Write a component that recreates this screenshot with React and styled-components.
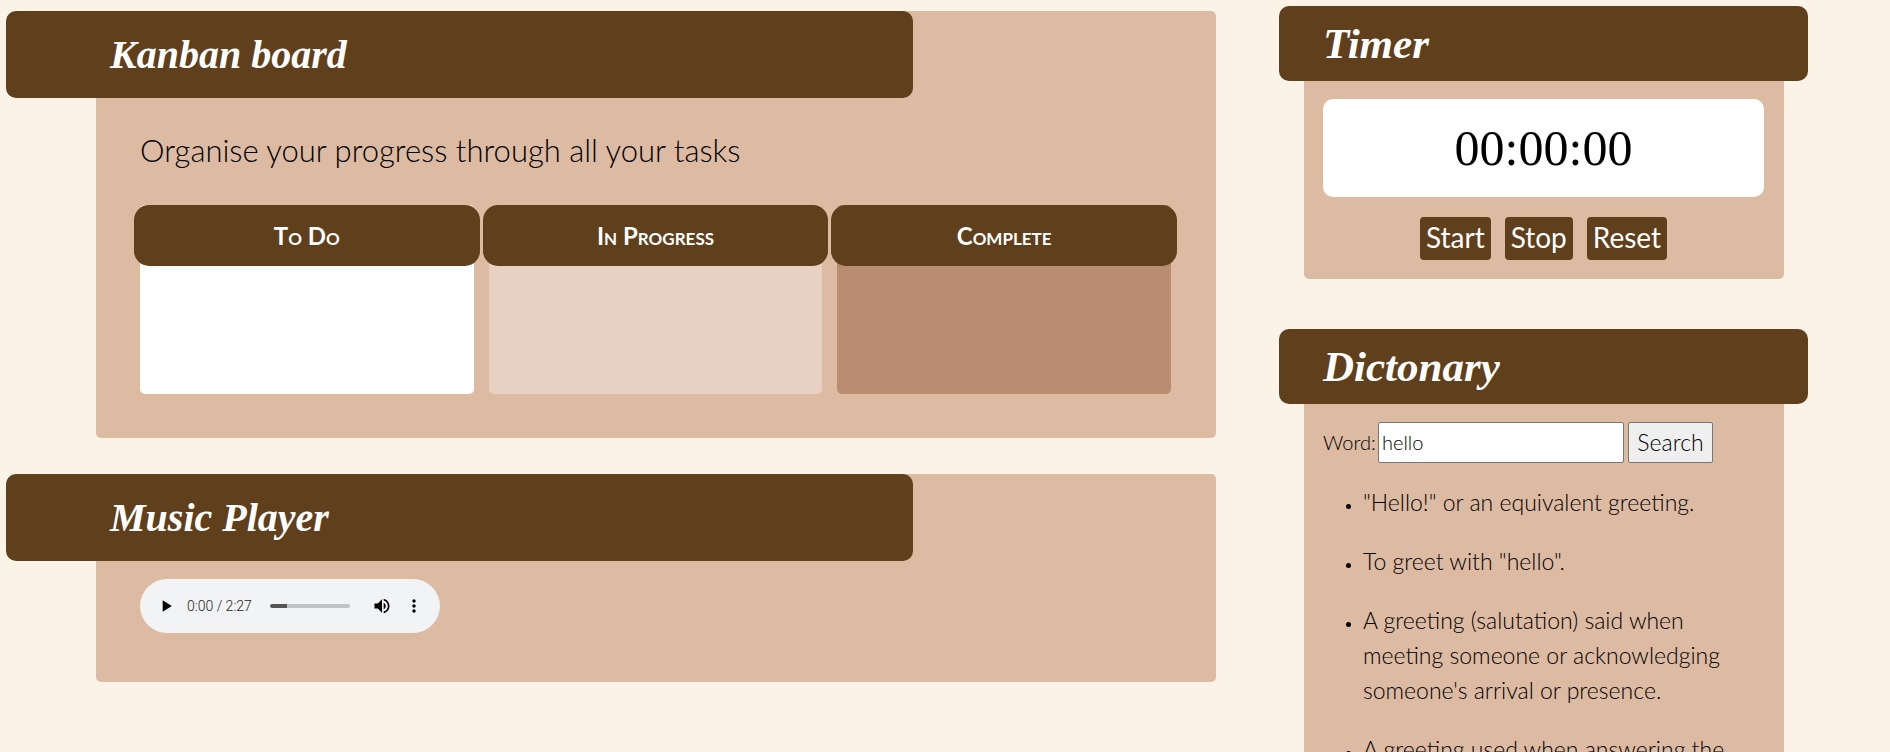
import React, { useState } from "react";
import styled, { createGlobalStyle } from "styled-components";
import { MdPlayArrow, MdVolumeUp, MdMoreVert } from "react-icons/md";

const color = {
  page: "#fbf3e8",
  brown: "#603f1d",
  tan: "#ddbaa2",
  blush: "#e8d1c2",
  clay: "#b88d72",
};

const GlobalStyle = createGlobalStyle`
  *, *::before, *::after { box-sizing: border-box; }
  body {
    margin: 0;
    background: ${color.page};
    color: #000;
    font-family: Lato, "Open Sans", sans-serif;
    font-weight: 300;
  }
  h1, h2, p, ul { margin: 0; }
`;

const Page = styled.main`
  display: grid;
  grid-template-columns: 7fr 3fr;
  align-items: start;
  column-gap: 88px;
  height: 100vh;
  padding: 0 106px 0 96px;
  overflow: hidden;
`;

const Column = styled.div`
  display: flex;
  flex-direction: column;
  gap: ${(p) => p.$gap}px;
  min-width: 0;
  padding-top: ${(p) => p.$top}px;
`;

const Panel = styled.section`
  background: ${color.tan};
  border-radius: 5px;
`;

const PanelTitle = styled.h1`
  display: flex;
  align-items: center;
  background: ${color.brown};
  color: #fff;
  border-radius: 10px;
  font-family: "Liberation Serif", serif;
  font-style: italic;
  font-weight: 700;
  font-size: 40px;
  line-height: 48px;
  white-space: nowrap;
`;

const WideTitle = styled(PanelTitle)`
  width: 81%;
  height: 87px;
  margin-left: -90px;
  padding-left: 104px;
`;

const SideTitle = styled(PanelTitle)`
  height: 75px;
  margin: 0 -24px 0 -25px;
  padding-left: 44px;
  font-size: 43px;
`;

const BoardBody = styled.div`
  padding: 34px 45px 44px 44px;
`;

const Intro = styled.p`
  font-size: 31px;
  line-height: 36px;
`;

const Lanes = styled.div`
  display: grid;
  grid-template-columns: repeat(3, 1fr);
  gap: 15px;
  margin-top: 37px;
`;

const Lane = styled.div`
  height: 189px;
  background: ${(p) => p.$fill};
  border-radius: 5px;
`;

const LaneTitle = styled.h2`
  margin: 0 -6px;
  background: ${color.brown};
  color: #fff;
  border-radius: 15px;
  font-family: Lato, sans-serif;
  font-variant: small-caps;
  font-weight: 700;
  font-size: 24px;
  line-height: 61px;
  text-align: center;
`;

const PlayerBody = styled.div`
  padding: 18px 44px 49px;
`;

const Player = styled.div`
  display: flex;
  align-items: center;
  width: 300px;
  height: 54px;
  padding: 0 14px;
  background: #f1f3f4;
  border-radius: 27px;
`;

const IconButton = styled.button`
  display: flex;
  justify-content: center;
  width: 24px;
  padding: 0;
  border: 0;
  background: none;
  color: #000;
  font-size: 20px;
`;

const Time = styled.span`
  margin-left: 9px;
  color: #222;
  font-family: Roboto, sans-serif;
  font-weight: 300;
  font-size: 14px;
  white-space: nowrap;
`;

const Seek = styled.input`
  appearance: none;
  width: 80px;
  height: 4px;
  margin: 0 20px 0 auto;
  border-radius: 2px;
  background: linear-gradient(to right, #555 21%, #c1c2c3 21%);
  &::-webkit-slider-thumb {
    appearance: none;
    width: 0;
    height: 0;
  }
  & + button { margin-right: 8px; }
`;

const TimerBody = styled.div`
  padding: 18px 20px 19px 19px;
`;

const Clock = styled.div`
  background: #fff;
  border-radius: 10px;
  font-family: "Liberation Serif", serif;
  font-weight: 400;
  font-size: 50px;
  line-height: 98px;
  text-align: center;
`;

const Controls = styled.div`
  display: flex;
  justify-content: center;
  gap: 14px;
  margin-top: 20px;
`;

const TimerButton = styled.button`
  height: 43px;
  padding: 0 6px 4px;
  border: 0;
  border-radius: 4px;
  background: ${color.brown};
  color: #fff;
  font-family: inherit;
  font-weight: 400;
  font-size: 28px;
`;

const DictionaryBody = styled.div`
  padding: 18px 44px 44px 19px;
`;

const SearchForm = styled.form`
  display: flex;
  align-items: center;
  gap: 4px;
  font-size: 23px;
`;

const WordLabel = styled.label`
  width: 51px;
  padding-bottom: 2px;
  font-size: 20px;
  white-space: nowrap;
`;

const WordInput = styled.input`
  width: 246px;
  height: 41px;
  padding: 0 3px 2px;
  border: 1px solid #767676;
  border-radius: 2px;
  background: #fff;
  font: inherit;
  font-size: 20px;
`;

const SearchButton = styled.button`
  height: 41px;
  width: 85px;
  padding: 0 0 2px;
  border: 1px solid #767676;
  border-radius: 2px;
  background: #efefef;
  color: #000;
  font: inherit;
`;

const Definitions = styled.ul`
  display: flex;
  flex-direction: column;
  gap: 24px;
  margin-top: 22px;
  padding-left: 40px;
  font-size: 23px;
  line-height: 35px;
  li::marker { font-size: 16px; }
`;

const lanes = [
  { title: "To Do", fill: "#fff" },
  { title: "In Progress", fill: color.blush },
  { title: "Complete", fill: color.clay },
];

const definitions = [
  '"Hello!" or an equivalent greeting.',
  'To greet with "hello".',
  "A greeting (salutation) said when meeting someone or acknowledging someone's arrival or presence.",
  "A greeting used when answering the",
];

export default function App() {
  const [word, setWord] = useState("hello");

  return (
    <>
      <GlobalStyle />
      <Page>
        <Column $top={11} $gap={36}>
          <Panel>
            <WideTitle>Kanban board</WideTitle>
            <BoardBody>
              <Intro>Organise your progress through all your tasks</Intro>
              <Lanes>
                {lanes.map((lane) => (
                  <Lane key={lane.title} $fill={lane.fill}>
                    <LaneTitle>{lane.title}</LaneTitle>
                  </Lane>
                ))}
              </Lanes>
            </BoardBody>
          </Panel>
          <Panel>
            <WideTitle>Music Player</WideTitle>
            <PlayerBody>
              <Player>
                <IconButton type="button" aria-label="Play">
                  <MdPlayArrow />
                </IconButton>
                <Time>0:00 / 2:27</Time>
                <Seek type="range" min="0" max="147" defaultValue="0" aria-label="Seek" />
                <IconButton type="button" aria-label="Mute">
                  <MdVolumeUp />
                </IconButton>
                <IconButton type="button" aria-label="More options">
                  <MdMoreVert />
                </IconButton>
              </Player>
            </PlayerBody>
          </Panel>
        </Column>

        <Column $top={6} $gap={50}>
          <Panel>
            <SideTitle>Timer</SideTitle>
            <TimerBody>
              <Clock role="timer">00:00:00</Clock>
              <Controls>
                <TimerButton type="button">Start</TimerButton>
                <TimerButton type="button">Stop</TimerButton>
                <TimerButton type="button">Reset</TimerButton>
              </Controls>
            </TimerBody>
          </Panel>
          <Panel>
            <SideTitle>Dictonary</SideTitle>
            <DictionaryBody>
              <SearchForm onSubmit={(e) => e.preventDefault()}>
                <WordLabel htmlFor="word">Word:</WordLabel>
                <WordInput id="word" value={word} onChange={(e) => setWord(e.target.value)} />
                <SearchButton type="submit">Search</SearchButton>
              </SearchForm>
              <Definitions>
                {definitions.map((text) => (
                  <li key={text}>{text}</li>
                ))}
              </Definitions>
            </DictionaryBody>
          </Panel>
        </Column>
      </Page>
    </>
  );
}
